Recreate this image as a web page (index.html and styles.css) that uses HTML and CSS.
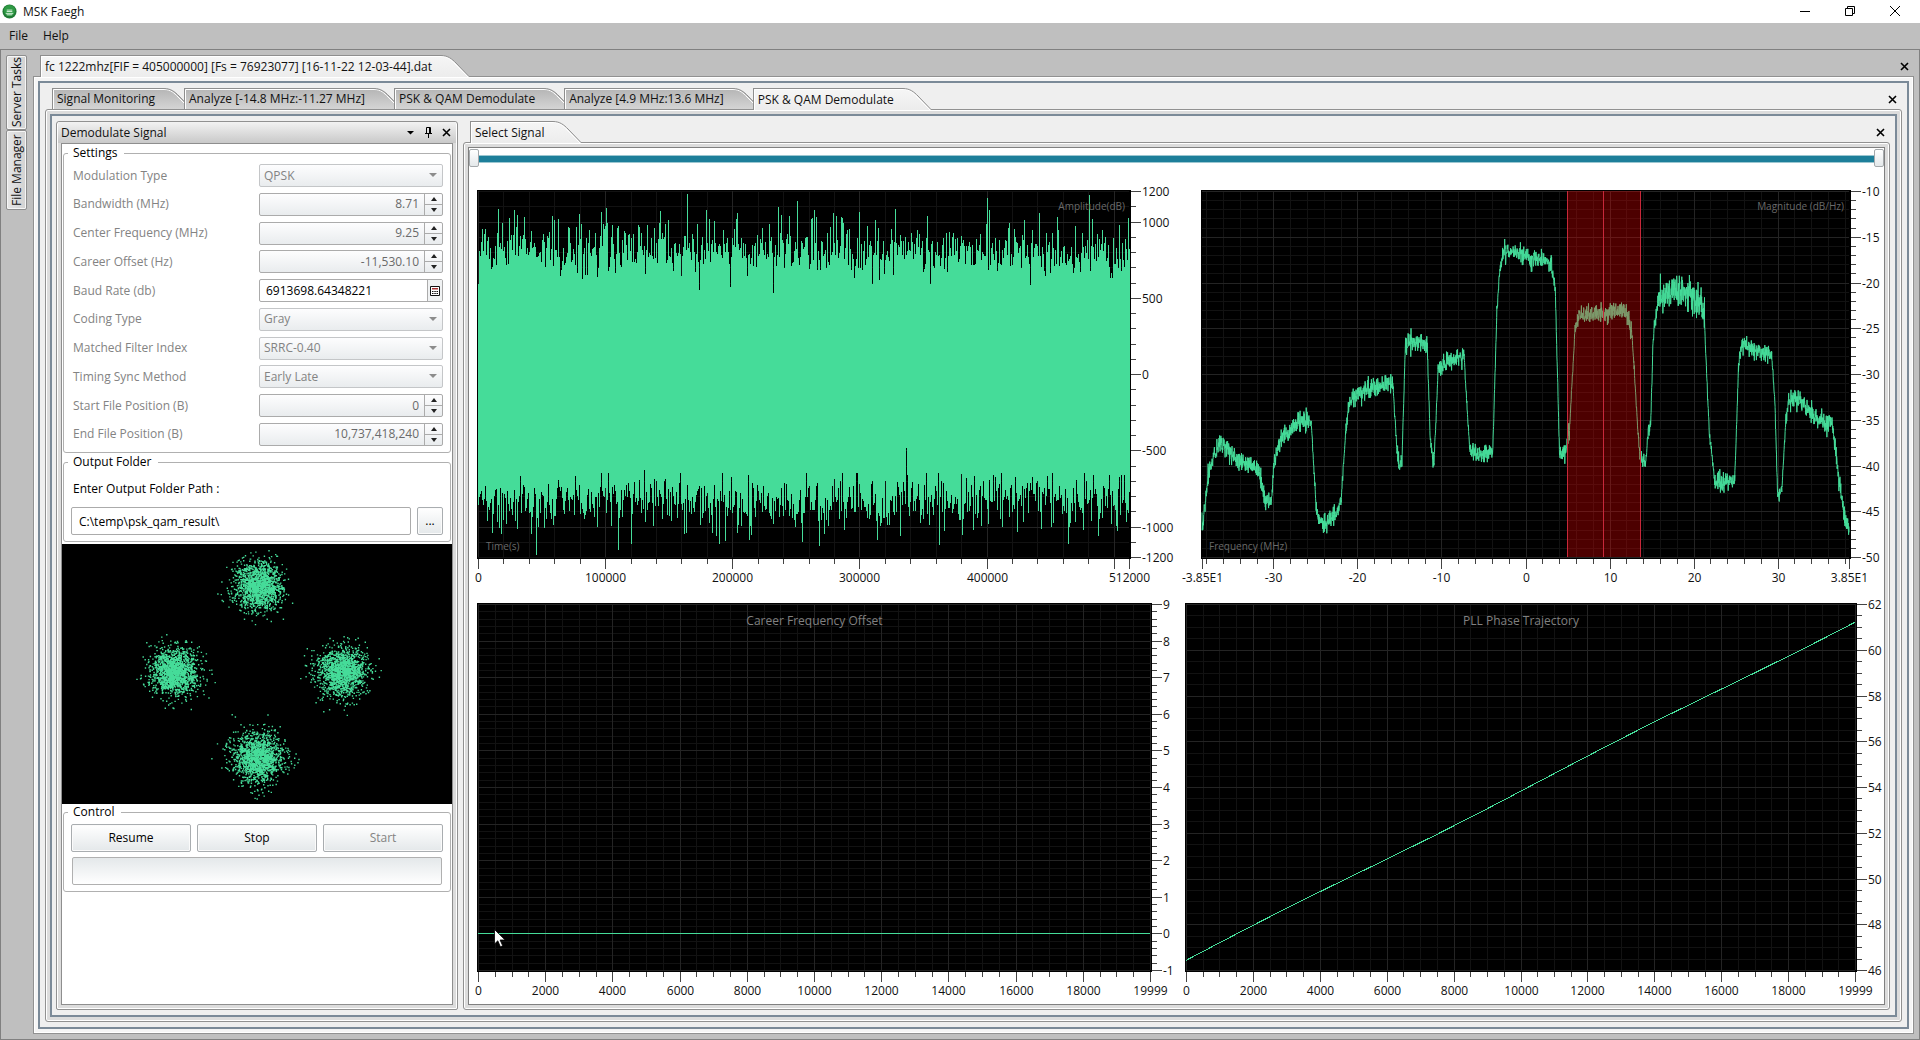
FILE: index.html
```html
<!DOCTYPE html>
<html lang="en">
<head>
    <meta charset="UTF-8">
    <meta name="viewport" content="width=device-width, initial-scale=1.0">
    <title>MSK Faegh</title>
    <link rel="stylesheet" href="styles.css">
</head>
<body>
    <header class="titlebar">
        <svg class="app-icon" viewBox="0 0 16 16">
            <circle cx="8" cy="8" r="7.5" fill="#1f7a33"/>
            <circle cx="8" cy="7" r="6" fill="#2f9a45"/>
            <path d="M5 6.5h6M5 8h6M4 10h8M5 11.5h6" stroke="#d5f0da" stroke-width="1"/>
        </svg>
        <h1>MSK Faegh</h1>
        <div class="window-buttons">
            <button type="button" aria-label="Minimize"><svg viewBox="0 0 12 12"><path d="M1 6.5h10"/></svg></button>
            <button type="button" aria-label="Restore"><svg viewBox="0 0 12 12"><path d="M1.5 3.5h7v7h-7zM3.5 3.5v-2h7v7h-2"/></svg></button>
            <button type="button" aria-label="Close"><svg viewBox="0 0 12 12"><path d="M1 1l10 10M11 1L1 11"/></svg></button>
        </div>
    </header>

    <nav class="menubar">
        <button type="button">File</button>
        <button type="button">Help</button>
    </nav>

    <main class="dock">
        <div class="side-tabs">
            <button type="button">Server Tasks</button>
            <button type="button">File Manager</button>
        </div>

        <section class="document">
            <div class="tabs">
                <button type="button" class="tab active"><span>fc 1222mhz[FIF = 405000000] [Fs = 76923077] [16-11-22 12-03-44].dat</span></button>
                <button type="button" class="close" aria-label="Close file"><svg viewBox="0 0 9 9"><path d="M1 1l7 7M8 1L1 8"/></svg></button>
            </div>
            <div class="pane pane-light">
                <div class="pane-body">
                    <section class="document">
                        <div class="tabs">
                            <button type="button" class="tab"><span>Signal Monitoring</span></button>
                            <button type="button" class="tab"><span>Analyze [-14.8 MHz:-11.27 MHz]</span></button>
                            <button type="button" class="tab"><span>PSK &amp; QAM Demodulate</span></button>
                            <button type="button" class="tab"><span>Analyze [4.9 MHz:13.6 MHz]</span></button>
                            <button type="button" class="tab active"><span>PSK &amp; QAM Demodulate</span></button>
                            <button type="button" class="close" aria-label="Close document"><svg viewBox="0 0 9 9"><path d="M1 1l7 7M8 1L1 8"/></svg></button>
                        </div>
                        <div class="pane">
                            <div class="pane-body columns">

                                <aside class="tool">
                                    <div class="tool-header">
                                        <h2>Demodulate Signal</h2>
                                        <button type="button" aria-label="Options"><svg viewBox="0 0 9 9"><path class="solid" d="M1 3h7L4.500 6.500z"/></svg></button>
                                        <button type="button" aria-label="Auto hide"><svg viewBox="0 0 9 11"><path class="thin" d="M2.500 6V.5h4V6M5.500 .5V6M1 6.500h7M4.500 7v4"/></svg></button>
                                        <button type="button" aria-label="Close panel"><svg viewBox="0 0 9 9"><path d="M1 1l7 7M8 1L1 8"/></svg></button>
                                    </div>
                                    <form class="tool-body">
                                        <fieldset>
                                            <legend>Settings</legend>
                                            <div class="rows">
                                                <div class="row">
                                                    <label for="modulation">Modulation Type</label>
                                                    <div class="select"><select id="modulation" disabled><option>QPSK</option></select></div>
                                                </div>
                                                <div class="row">
                                                    <label for="bandwidth">Bandwidth (MHz)</label>
                                                    <div class="spin"><input id="bandwidth" type="text" value="8.71" disabled><button type="button" class="up" aria-label="Increase"></button><button type="button" class="down" aria-label="Decrease"></button></div>
                                                </div>
                                                <div class="row">
                                                    <label for="center">Center Frequency (MHz)</label>
                                                    <div class="spin"><input id="center" type="text" value="9.25" disabled><button type="button" class="up" aria-label="Increase"></button><button type="button" class="down" aria-label="Decrease"></button></div>
                                                </div>
                                                <div class="row">
                                                    <label for="offset">Career Offset (Hz)</label>
                                                    <div class="spin"><input id="offset" type="text" value="-11,530.10" disabled><button type="button" class="up" aria-label="Increase"></button><button type="button" class="down" aria-label="Decrease"></button></div>
                                                </div>
                                                <div class="row">
                                                    <label for="baud">Baud Rate (db)</label>
                                                    <div class="calc">
                                                        <input id="baud" type="text" value="6913698.64348221">
                                                        <button type="button" aria-label="Calculator"><svg viewBox="0 0 10 10"><path fill="#fff" stroke="#111" d="M.5 .5h9v9h-9z"/><path fill="#a33" d="M2 2h6v1.500H2z"/><path fill="#111" d="M2 5h1.500v1H2zM4.300 5h1.500v1H4.300zM6.500 5H8v1H6.500zM2 7h1.500v1H2zM4.300 7h1.500v1H4.300zM6.500 7H8v1H6.500z"/></svg></button>
                                                    </div>
                                                </div>
                                                <div class="row">
                                                    <label for="coding">Coding Type</label>
                                                    <div class="select"><select id="coding" disabled><option>Gray</option></select></div>
                                                </div>
                                                <div class="row">
                                                    <label for="filter">Matched Filter Index</label>
                                                    <div class="select"><select id="filter" disabled><option>SRRC-0.40</option></select></div>
                                                </div>
                                                <div class="row">
                                                    <label for="timing">Timing Sync Method</label>
                                                    <div class="select"><select id="timing" disabled><option>Early Late</option></select></div>
                                                </div>
                                                <div class="row">
                                                    <label for="start">Start File Position (B)</label>
                                                    <div class="spin"><input id="start" type="text" value="0" disabled><button type="button" class="up" aria-label="Increase"></button><button type="button" class="down" aria-label="Decrease"></button></div>
                                                </div>
                                                <div class="row">
                                                    <label for="end">End File Position (B)</label>
                                                    <div class="spin"><input id="end" type="text" value="10,737,418,240" disabled><button type="button" class="up" aria-label="Increase"></button><button type="button" class="down" aria-label="Decrease"></button></div>
                                                </div>
                                            </div>
                                        </fieldset>

                                        <fieldset>
                                            <legend>Output Folder</legend>
                                            <div class="output">
                                                <label for="path">Enter Output Folder Path :</label>
                                                <div class="path">
                                                    <input id="path" type="text" value="C:\temp\psk_qam_result\">
                                                    <button type="button" class="btn">...</button>
                                                </div>
                                            </div>
                                        </fieldset>

                                        <div class="constellation" id="constellation"></div>

                                        <fieldset>
                                            <legend>Control</legend>
                                            <div class="control">
                                                <div class="buttons">
                                                    <button type="button" class="btn">Resume</button>
                                                    <button type="button" class="btn">Stop</button>
                                                    <button type="button" class="btn" disabled>Start</button>
                                                </div>
                                                <div class="progress" role="progressbar" aria-label="Progress"></div>
                                            </div>
                                        </fieldset>
                                    </form>
                                </aside>

                                <section class="document">
                                    <div class="tabs">
                                        <button type="button" class="tab active"><span>Select Signal</span></button>
                                        <button type="button" class="close" aria-label="Close chart"><svg viewBox="0 0 9 9"><path d="M1 1l7 7M8 1L1 8"/></svg></button>
                                    </div>
                                    <div class="pane">
                                        <div class="signal">
                                            <div class="range">
                                                <input type="range" min="0" max="100" value="0" aria-label="Range start">
                                                <input type="range" min="0" max="100" value="100" aria-label="Range end">
                                            </div>
                                            <div class="charts">
                                                <div class="chart" id="timeChart"></div>
                                                <div class="chart" id="spectrumChart"></div>
                                                <div class="chart" id="offsetChart"></div>
                                                <div class="chart" id="phaseChart"></div>
                                                <svg class="cursor" viewBox="0 0 12 19"><path d="M.5 .5v14.500l3.300-3.200 2.600 6 2.300-1-2.600-5.800h5z" fill="#fff" stroke="#000" stroke-width=".8"/></svg>
                                            </div>
                                        </div>
                                    </div>
                                </section>

                            </div>
                        </div>
                    </section>
                </div>
            </div>
        </section>
    </main>

    <script src="charts.js"></script>
</body>
</html>
```
FILE: styles.css
```css
* {
    margin: 0;
    padding: 0;
    box-sizing: border-box;
}

body {
    min-height: 100vh;
    display: flex;
    flex-direction: column;
    background: #bfbfbf;
    color: #111;
    font-family: "Segoe UI", "Open Sans", sans-serif;
    font-size: 12px;
    line-height: 16px;
}

button, input, select {
    font: inherit;
    color: inherit;
}

button {
    border: none;
    background: none;
}

h1, h2 {
    font-size: 12px;
    font-weight: normal;
}

svg {
    display: block;
}

/* title bar and menu */
.titlebar {
    height: 23px;
    display: flex;
    align-items: center;
    gap: 6px;
    padding: 0 3px 0 2px;
    background: #fff;
}

.app-icon {
    width: 15px;
    height: 15px;
}

.window-buttons {
    display: flex;
    align-self: flex-start;
    margin-left: auto;
}

.window-buttons button {
    width: 45px;
    height: 21px;
    display: flex;
    align-items: center;
    justify-content: center;
}

.window-buttons svg {
    width: 12px;
    height: 12px;
    fill: none;
    stroke: #000;
}

.menubar {
    height: 26px;
    display: flex;
    align-items: center;
    gap: 15px;
    padding-left: 9px;
}

/* docking area */
.dock {
    position: relative;
    z-index: 0;
    flex: 1;
    display: flex;
    gap: 6px;
    padding: 5px;
    border: 1px solid #808080;
}

.side-tabs {
    width: 21px;
    display: flex;
    flex-direction: column;
}

.side-tabs button {
    writing-mode: vertical-rl;
    transform: rotate(180deg);
    width: 21px;
    height: 75px;
    border: 1px solid #8e8e8e;
    border-radius: 2px;
    background: linear-gradient(to left, #e6e6e6, #d2d2d2);
    box-shadow: inset 0 0 0 1px #f6f6f6;
}

.side-tabs button:last-child {
    height: 80px;
}

.document {
    flex: 1;
    min-width: 0;
    display: flex;
    flex-direction: column;
}

.tabs {
    height: 22px;
    display: flex;
    padding-left: 7px;
    margin-bottom: -1px;
}

.tab {
    position: relative;
    z-index: 1;
    height: 21px;
    display: flex;
    align-items: center;
    padding: 1px 0 0 4px;
    margin-right: -8px;
    border-left: 1px solid #8e8e8e;
    white-space: nowrap;
}

.tab.active {
    z-index: 2;
    height: 22px;
    margin-right: 0;
}

.tab-shape {
    flex-shrink: 0;
    width: 37px;
    height: 20px;
}

.tab-back {
    position: absolute;
    z-index: -1;
    inset: 0;
    width: 100%;
    height: 100%;
}

.close {
    width: 9px;
    margin: 0 5px 0 auto;
    display: flex;
    align-items: center;
}

.close svg {
    width: 9px;
    height: 9px;
}

.close path, .tool-header path {
    fill: none;
    stroke: #000;
    stroke-width: 1.6;
}

.pane {
    flex: 1;
    display: flex;
    padding: 4px;
    border: 1px solid #919191;
    border-radius: 3px;
    background: #dcdcdc;
    box-shadow: inset 0 0 0 1px #fff;
}

.pane-light {
    border-radius: 0;
    background: #f5f5f5;
}

.pane-body {
    flex: 1;
    min-width: 0;
    display: flex;
    padding: 5px;
    border: 2px solid #7b8a98;
    background: #efefef;
}

.columns {
    gap: 5px;
    padding-left: 4px;
}

/* demodulate panel */
.tool {
    width: 402px;
    display: flex;
    flex-direction: column;
    padding: 0 4px 4px;
    border: 1px solid #919191;
    border-radius: 3px 3px 2px 2px;
    background: #dcdcdc;
    box-shadow: inset 0 0 0 1px #fff;
}

.tool-header {
    height: 21px;
    display: flex;
    align-items: center;
    gap: 9px;
    margin: 0 -3px;
    padding: 0 5px 0 3px;
    background: linear-gradient(#f2f2f2, #c9c9c9);
}

.tool-header h2 {
    margin-right: auto;
}

.tool-header svg {
    width: 9px;
    height: 11px;
}

.tool-header .solid {
    fill: #000;
    stroke: none;
}

.tool-header .thin {
    stroke-width: 1;
}

.tool-body {
    flex: 1;
    padding-top: 1px;
    border: 1px solid #8e8e8e;
    background: #fff;
}

fieldset {
    margin: 0 1px;
    padding: 0 7px 6px;
    border: 1px solid #b0b0b0;
    border-radius: 3px;
}

legend {
    padding: 0 6px 0 5px;
    margin-left: -3px;
    color: #000;
}

.rows {
    height: 282px;
    display: flex;
    flex-direction: column;
    justify-content: space-between;
    margin-top: 3px;
}

.row {
    height: 23px;
    display: grid;
    grid-template-columns: 1fr 184px;
    align-items: center;
}

.row label {
    padding-left: 2px;
    color: #838383;
}

.select, .spin, .calc {
    height: 23px;
    border: 1px solid #ababab;
    border-radius: 2px;
    background: linear-gradient(#fdfdfe, #e9ecee);
}

.select {
    position: relative;
    border-color: #c4c6c8;
}

.select select {
    appearance: none;
    width: 100%;
    height: 21px;
    padding-left: 4px;
    border: none;
    background: none;
    color: #838383;
    opacity: 1;
}

.select::after {
    content: "";
    position: absolute;
    top: 8px;
    right: 5px;
    border: 4px solid transparent;
    border-top-color: #8c8c8c;
    border-bottom: none;
    pointer-events: none;
}

.spin {
    display: grid;
    grid-template-columns: 1fr 17px;
    grid-template-rows: 10px 11px;
}

.spin input {
    grid-row: span 2;
    min-width: 0;
    padding-right: 5px;
    border: none;
    border-right: 1px solid #ababab;
    background: none;
    color: #6a6a6a;
    text-align: right;
}

.spin button {
    display: flex;
    align-items: center;
    justify-content: center;
}

.spin button::after {
    content: "";
    border: 3px solid transparent;
}

.spin .up::after {
    border-bottom: 4px solid #222;
    border-top: none;
}

.spin .down {
    border-top: 1px solid #ababab;
}

.spin .down::after {
    border-top: 4px solid #222;
    border-bottom: none;
}

.calc {
    display: flex;
    background: #fff;
}

.calc input {
    flex: 1;
    min-width: 0;
    padding-left: 6px;
    border: none;
    background: none;
    color: #000;
}

.calc button {
    width: 15px;
    display: flex;
    align-items: center;
    justify-content: center;
    border-left: 1px solid #ababab;
    background: #f0f2f3;
}

.calc svg {
    width: 10px;
    height: 10px;
}

.tool-body fieldset + fieldset {
    margin-top: 1px;
}

.output label {
    display: block;
    padding: 11px 0 10px 2px;
    color: #000;
}

.path {
    display: flex;
    gap: 6px;
}

.path input {
    flex: 1;
    min-width: 0;
    height: 28px;
    padding-left: 7px;
    border: 1px solid #ababab;
    border-radius: 2px;
    color: #000;
}

.btn {
    min-width: 26px;
    height: 28px;
    border: 1px solid #a9adb0;
    border-radius: 2px;
    background: linear-gradient(#fff, #e4e8ea);
    box-shadow: inset 0 0 0 1px #fbfbfb;
    color: #000;
}

.btn:disabled {
    color: #838383;
}

.constellation {
    position: relative;
    height: 260px;
    margin-top: 2px;
    background: #000;
}

.control {
    display: flex;
    flex-direction: column;
    gap: 5px;
    margin-top: 4px;
}

.buttons {
    display: grid;
    grid-template-columns: repeat(3, 1fr);
    gap: 6px;
}

.progress {
    height: 28px;
    margin: 0 1px;
    border: 1px solid #b0b0b0;
    border-radius: 2px;
    background: linear-gradient(#e4e8ea, #fff);
}

/* charts */
.signal {
    flex: 1;
    min-width: 0;
    display: flex;
    flex-direction: column;
    border: 1px solid #808080;
    background: #fff;
}

.range {
    position: relative;
    height: 29px;
}

.range::before {
    content: "";
    position: absolute;
    top: 7px;
    left: 9px;
    right: 9px;
    height: 6px;
    border: 1px solid #9cc7d1;
    border-width: 1px 0;
    background: #1d7f9a;
}

.range input {
    position: absolute;
    top: 1px;
    left: 0;
    width: 100%;
    height: 18px;
    appearance: none;
    background: none;
    pointer-events: none;
}

.range input::-webkit-slider-thumb {
    appearance: none;
    width: 10px;
    height: 18px;
    border: 1px solid #a5a9ac;
    border-radius: 2px;
    background: linear-gradient(#fff, #e4e8ea);
    pointer-events: auto;
}

.charts {
    position: relative;
    flex: 1;
    display: grid;
    grid-template-columns: 1fr 1fr;
    grid-template-rows: 1fr 1fr;
    padding-bottom: 1px;
}

.chart {
    position: relative;
    min-width: 0;
}

.chart svg, .constellation svg {
    position: absolute;
    overflow: visible;
    width: 100%;
    height: 100%;
}

.chart text {
    fill: #111;
}

.chart .title {
    fill: #808080;
}

.chart .corner {
    fill: #6a6a6a;
    font-size: 10px;
}

.plot {
    fill: #000;
}

.grid-minor, .grid-major, .ticks, .trace {
    fill: none;
    shape-rendering: crispEdges;
}

.grid-minor {
    stroke: #121212;
}

.grid-major {
    stroke: #242424;
}

.ticks {
    stroke: #444;
}

.trace {
    stroke: #45dc99;
}

.spectrum {
    shape-rendering: auto;
}

.dots {
    shape-rendering: auto;
    stroke-width: 1.4;
}

.band {
    fill: rgba(255, 0, 0, 0.3);
}

.band-line {
    stroke: #c8283a;
    shape-rendering: crispEdges;
}

.cursor {
    position: absolute;
    left: 25px;
    bottom: 56px;
    width: 12px;
    height: 19px;
}
```
FILE: charts.js
```js
const NS = 'http://www.w3.org/2000/svg';

// seeded random so that every redraw gives the same noise
let seed = 7;
function random() {
    seed = (seed * 16807) % 2147483647;
    return seed / 2147483647;
}

function gauss() {
    return Math.sqrt(-2 * Math.log(random())) * Math.cos(2 * Math.PI * random());
}

function add(parent, name, attrs, text) {
    const el = document.createElementNS(NS, name);
    for (const key in attrs) el.setAttribute(key, attrs[key]);
    if (text !== undefined) el.textContent = text;
    parent.appendChild(el);
    return el;
}

// slanted tab outlines
function drawTabs() {
    document.querySelectorAll('.tab').forEach(tab => {
        tab.querySelectorAll('svg').forEach(s => s.remove());
        add(tab, 'svg', { class: 'tab-shape' });
        const active = tab.classList.contains('active');
        const back = add(tab, 'svg', { class: 'tab-back' });
        const id = active ? 'tabOn' : 'tabOff';
        const defs = add(back, 'defs', {});
        const grad = add(defs, 'linearGradient', { id: id, x1: 0, y1: 0, x2: 0, y2: 1 });
        add(grad, 'stop', { offset: 0, 'stop-color': active ? '#f6f6f6' : '#b4b4b4' });
        add(grad, 'stop', { offset: 1, 'stop-color': active ? '#ececec' : '#d6d6d6' });
        const s = tab.offsetWidth - 42;
        const edge = `M0 .5H${s + 13}C${s + 20} .5 ${s + 24} 4 ${s + 28} 8L${s + 41} 21.500`;
        add(back, 'path', { d: edge + 'V22H0z', fill: `url(#${id})` });
        add(back, 'path', { d: `M.5 22V1.500H${s + 13}C${s + 20} 1.500 ${s + 23} 5 ${s + 27} 9L${s + 40} 22`, fill: 'none', stroke: '#fff' });
        add(back, 'path', { d: edge, fill: 'none', stroke: '#8e8e8e' });
    });
}

function steps(min, max, step) {
    const list = [];
    for (let i = Math.ceil(min / step - 0.001); i * step <= max + step * 0.001; i++) {
        list.push(+(i * step).toFixed(4));
    }
    return list;
}

function makeChart(id, o) {
    const box = document.getElementById(id);
    box.innerHTML = '';
    const svg = add(box, 'svg', {});
    const left = o.left;
    const right = box.clientWidth - o.right;
    const top = 13;
    const bottom = box.clientHeight - 31;
    const x0 = left + 1, x1 = right - 2, y0 = top + 1, y1 = bottom - 2;
    const fx = v => x0 + (v - o.x[0]) / (o.x[1] - o.x[0]) * (x1 - x0);
    const fy = v => y1 - (v - o.y[0]) / (o.y[1] - o.y[0]) * (y1 - y0);
    const sx = v => Math.round(fx(v)) + 0.5;
    const sy = v => Math.round(fy(v)) + 0.5;

    add(svg, 'rect', { class: 'plot', x: left, y: top, width: right - left, height: bottom - top });

    const xs = v => `M${sx(v)} ${y0}V${y1}`;
    const ys = v => `M${x0} ${sy(v)}H${x1}`;
    const xMajor = steps(o.x[0], o.x[1], o.xMajor);
    const yMajor = steps(o.y[0], o.y[1], o.yMajor);
    const xMinor = steps(o.x[0], o.x[1], o.xMinor);
    const yMinor = steps(o.y[0], o.y[1], o.yMinor);
    add(svg, 'path', { class: 'grid-minor', d: xMinor.map(xs).join('') + yMinor.map(ys).join('') });
    add(svg, 'path', { class: 'grid-major', d: xMajor.map(xs).join('') + yMajor.map(ys).join('') });

    const xLong = [...new Set([...xMajor, o.x[0], o.x[1]])];
    const yLong = [...new Set([...yMajor, o.y[0], o.y[1]])];
    add(svg, 'path', {
        class: 'ticks',
        d: xMinor.map(v => `M${sx(v)} ${bottom}v5`).join('') +
            xLong.map(v => `M${sx(v)} ${bottom}v10`).join('') +
            yMinor.map(v => `M${right} ${sy(v)}h5`).join('') +
            yLong.map(v => `M${right} ${sy(v)}h10`).join('')
    });

    const labels = o.xLabels || {};
    xLong.forEach(v => {
        // the last round value is left out when it would touch the end label
        if (v !== o.x[1] && sx(o.x[1]) - sx(v) < 30) return;
        add(svg, 'text', { x: sx(v), y: bottom + 23, 'text-anchor': 'middle' }, labels[v] || v);
    });
    yLong.forEach(v => {
        add(svg, 'text', { x: right + 11, y: sy(v) + 4 }, v);
    });

    return { svg, left, right, top, bottom, x0, x1, y0, y1, sx, sy, fx, fy };
}

function drawTime() {
    seed = 41;
    const c = makeChart('timeChart', {
        left: 8, right: 46, x: [0, 512000], y: [-1200, 1200],
        xMajor: 100000, xMinor: 20000, yMajor: 500, yMinor: 100
    });
    // peaks as [position, level]
    const peaks = [[15000, 930], [26000, 920], [28500, 1080], [58500, 1040], [128500, 930], [142500, 1000],
        [164500, 1185], [172000, 990], [179000, 1080], [185500, 1010], [204000, 1060], [236000, 1100],
        [251000, 1140], [264500, 1080], [300000, 1070], [401500, 1080], [441000, 1060], [480500, 1180],
        [15500, 1090], [52000, -1000], [45500, -1180], [42000, -1040], [110000, -1150], [120500, -1110],
        [194500, -1090], [213000, -1080], [268500, -1120], [313500, -1080], [464000, -1110]];
    const dips = [[82000, 630], [173500, 560], [198500, 580], [232000, 540], [315500, 620], [434000, 590],
        [76000, -660], [96500, -640], [130500, -620], [337000, -480], [422000, -670]];
    const width = c.x1 - c.x0;
    const up = [], down = [];
    for (let i = 0; i <= width; i++) {
        up.push(Math.max(600, 800 + gauss() * 75 + (random() < 0.3 ? random() * 180 : 0)));
        down.push(-Math.max(640, 820 + gauss() * 85 + (random() < 0.25 ? random() * 150 : 0)));
    }
    peaks.concat(dips).forEach(([t, v]) => {
        (v > 0 ? up : down)[Math.round(t / 512000 * width)] = v;
    });
    let d = '';
    up.forEach((v, i) => {
        d += `M${c.x0 + i + 0.5} ${c.sy(v)}V${c.sy(down[i])}`;
    });
    add(c.svg, 'path', { class: 'trace', d: d });
    add(c.svg, 'text', { class: 'corner', x: c.left + 9, y: c.bottom - 9 }, 'Time(s)');
    add(c.svg, 'text', { class: 'corner', x: c.right - 6, y: c.top + 20, 'text-anchor': 'end' }, 'Amplitude(dB)');
}

const envelope = [
    [-38.5, -47], [-37.75, -41.1], [-37.1, -38.9], [-36.3, -37.5], [-35.2, -38.6], [-34.1, -39.5], [-32, -40.2],
    [-31.5, -41.1], [-31.07, -43.5], [-30.3, -44.4], [-29.9, -39.3], [-29, -37.1], [-27.7, -35.8], [-26.5, -35.1],
    [-25.5, -35.3], [-24.9, -44.8], [-24.55, -46], [-23.7, -46.2], [-22.4, -45.1], [-21.96, -44], [-21.36, -36],
    [-21, -33.3], [-19.66, -32], [-17.96, -31.5], [-15.8, -30.9], [-15.3, -38.2], [-15, -40.4], [-14.7, -39.3],
    [-14.3, -26.9], [-12.85, -26.4], [-11.7, -26.7], [-11.36, -36.7], [-10.9, -40], [-10.4, -29.5], [-9.4, -28.7],
    [-7.3, -28], [-7, -33.1], [-6.6, -38.6], [-3.9, -38.7], [-3.4, -22.9], [-3.05, -18.5], [-2.55, -16.7],
    [-0.93, -16.7], [0.77, -17.4], [3.03, -17.6], [3.54, -20.7], [4.05, -38.9], [4.8, -38.4], [5.24, -36],
    [5.9, -25.1], [6.3, -23.6], [11.2, -23.1], [12.1, -23.3], [12.7, -25.8], [13.3, -35.3], [13.6, -38.9],
    [14.3, -39.8], [14.6, -36.4], [14.9, -35.6], [15.2, -25.8], [15.8, -21.8], [17.7, -20.7], [18.9, -21.1],
    [20.9, -22.2], [21.3, -24.4], [21.85, -36], [22.25, -39.3], [22.5, -41.7], [24.9, -41.7], [25.35, -29.1],
    [25.8, -26.5], [27.2, -27.5], [29.3, -27.8], [29.7, -33.5], [30, -43.1], [30.5, -42.6], [31, -34.9],
    [31.4, -32.7], [32.4, -32.7], [34, -34.2], [35.6, -35.3], [36.5, -35.3], [37.1, -40], [37.75, -44.4],
    [38.3, -46.9], [38.5, -46.8]
];

function drawSpectrum() {
    seed = 99;
    const c = makeChart('spectrumChart', {
        left: 24, right: 34, x: [-38.5, 38.5], y: [-50, -10],
        xMajor: 10, xMinor: 2, yMajor: 5, yMinor: 1,
        xLabels: { '-38.5': '-3.85E1', '38.5': '3.85E1' }
    });
    const points = [];
    for (let k = 0; k < envelope.length - 1; k++) {
        const [fa, da] = envelope[k];
        const [fb, db] = envelope[k + 1];
        const slope = Math.abs((db - da) / (fb - fa));
        const wide = fa >= 15.8 && fa < 21;
        const sigma = slope > 8 ? 0.25 : wide ? 0.85 : 0.5;
        for (let f = fa; f < fb; f += 0.025) {
            const v = da + (db - da) * (f - fa) / (fb - fa) + gauss() * sigma;
            points.push(c.fx(f).toFixed(1) + ' ' + c.fy(v).toFixed(1));
        }
    }
    add(c.svg, 'path', { class: 'trace spectrum', d: 'M' + points.join('L') });
    const a = c.sx(4.9), b = c.sx(13.65), m = c.sx(9.25);
    add(c.svg, 'rect', { class: 'band', x: a, y: c.y0, width: b - a, height: c.y1 - c.y0 });
    add(c.svg, 'path', { class: 'band-line', d: `M${a} ${c.y0}V${c.y1}M${b} ${c.y0}V${c.y1}M${m} ${c.y0}V${c.y1}` });
    add(c.svg, 'text', { class: 'corner', x: c.left + 8, y: c.bottom - 9 }, 'Frequency (MHz)');
    add(c.svg, 'text', { class: 'corner', x: c.right - 7, y: c.top + 20, 'text-anchor': 'end' }, 'Magnitude (dB/Hz)');
}

function drawOffset() {
    const c = makeChart('offsetChart', {
        left: 8, right: 25, x: [0, 19999], y: [-1, 9],
        xMajor: 2000, xMinor: 500, yMajor: 1, yMinor: 0.2
    });
    add(c.svg, 'path', { class: 'trace', d: `M${c.x0} ${c.sy(0)}H${c.x1}` });
    add(c.svg, 'text', { class: 'title', x: (c.left + c.right) / 2, y: c.top + 22, 'text-anchor': 'middle' }, 'Career Frequency Offset');
}

function drawPhase() {
    const c = makeChart('phaseChart', {
        left: 8, right: 28, x: [0, 19999], y: [46, 62],
        xMajor: 2000, xMinor: 500, yMajor: 2, yMinor: 0.5
    });
    let d = `M${c.x0} ${c.fy(46.42)}`;
    for (let x = 500; x <= 20000; x += 500) {
        const v = 46.42 + 14.82 * x / 20000 + Math.sin(x / 1700) * 0.05;
        d += `L${c.fx(Math.min(x, 19999)).toFixed(1)} ${c.fy(v).toFixed(1)}`;
    }
    add(c.svg, 'path', { class: 'trace', d: d });
    add(c.svg, 'text', { class: 'title', x: (c.left + c.right) / 2, y: c.top + 22, 'text-anchor': 'middle' }, 'PLL Phase Trajectory');
}

function drawConstellation() {
    seed = 1234;
    const box = document.getElementById('constellation');
    box.innerHTML = '';
    const svg = add(box, 'svg', {});
    const cx = Math.round(box.clientWidth / 2) + 1;
    const cy = Math.round(box.clientHeight / 2) - 2;
    let d = '';
    [[0, -86], [-84, 0], [84, 0], [0, 86]].forEach(([dx, dy]) => {
        for (let i = 0; i < 1500; i++) {
            const x = cx + dx + gauss() * 12;
            const y = cy + dy + gauss() * 12;
            d += `M${x.toFixed(1)} ${y.toFixed(1)}h1.4`;
        }
    });
    add(svg, 'path', { class: 'trace dots', d: d });
}

function drawAll() {
    drawTabs();
    drawTime();
    drawSpectrum();
    drawOffset();
    drawPhase();
    drawConstellation();
}

drawAll();
window.addEventListener('resize', drawAll);
```
